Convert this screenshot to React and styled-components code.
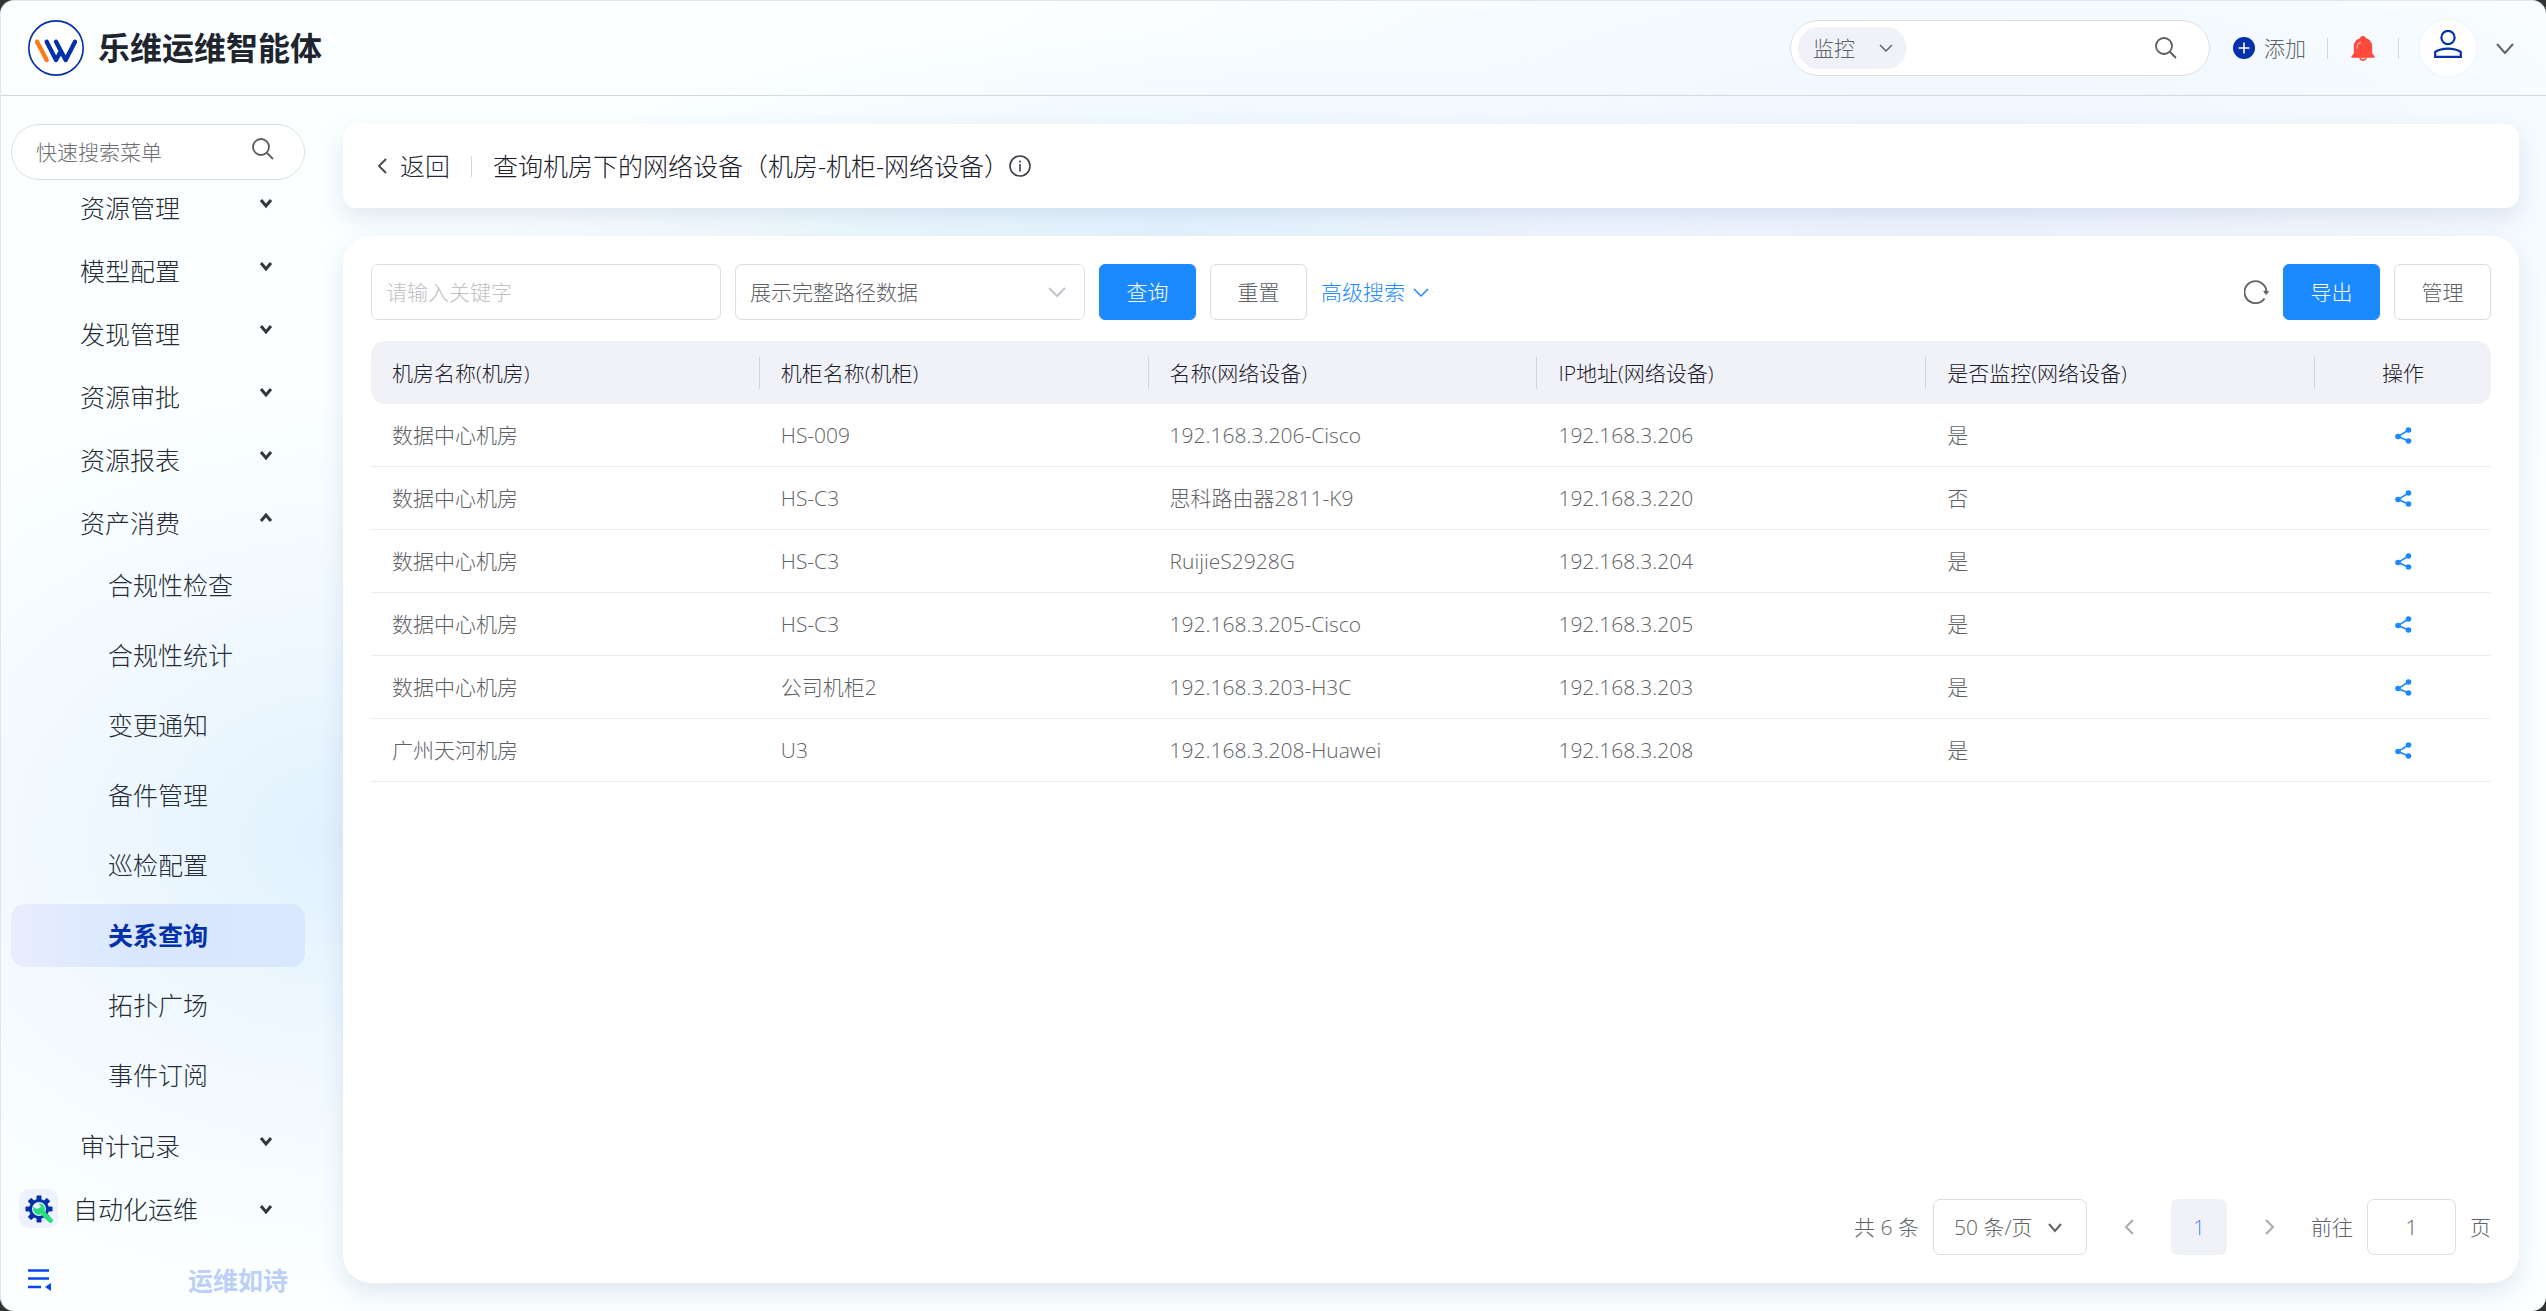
import { useState } from 'react';
import styled, { createGlobalStyle } from 'styled-components';

const GlobalStyle = createGlobalStyle`
    * {
        box-sizing: border-box;
    }

    body {
        margin: 0;
        background: #333;
        color: #262b36;
        font-family: 'Open Sans', 'Noto Sans CJK SC', sans-serif;
        font-size: 21px;
        font-weight: 300;
        line-height: 32px;
    }

    button, input, select {
        font: inherit;
        color: inherit;
        margin: 0;
        padding: 0;
        border: none;
        background: none;
        outline: none;
    }

    button {
        cursor: pointer;
    }

    select {
        appearance: none;
    }

    a {
        color: inherit;
        text-decoration: none;
    }
`;

const Frame = styled.div`
    min-height: 100vh;
    display: flex;
    flex-direction: column;
    border-top: 1px solid #e2e6e8;
    border-left: 1px solid #e2e6e8;
    border-radius: 14px;
    overflow: hidden;
    background:
        radial-gradient(ellipse 24% 34% at 14% 64%, #e0f1fe 0%, rgba(234, 245, 255, 0.7) 45%, rgba(250, 255, 255, 0) 100%),
        radial-gradient(ellipse 40% 30% at 76% 14%, #eff5ff 0%, rgba(250, 255, 255, 0) 100%),
        radial-gradient(ellipse 26% 16% at 46% 18%, #e4f5ff 0%, rgba(250, 255, 255, 0) 100%),
        #fbffff;
`;

const Header = styled.header`
    height: 95px;
    padding: 0 32px 0 27px;
    display: flex;
    align-items: center;
    border-bottom: 1px solid #d3d8da;
`;

const Brand = styled.a`
    display: flex;
    align-items: center;
    gap: 14px;
    margin-right: auto;
    font-size: 32px;
    font-weight: 700;
    color: #20242e;
`;

const HeaderSearch = styled.div`
    width: 420px;
    height: 56px;
    padding: 0 32px 0 7px;
    display: flex;
    align-items: center;
    border: 1px solid #dedede;
    border-radius: 28px;
    background: #fff;
    color: #606266;

    input {
        flex: 1;
        min-width: 0;
        padding: 0 14px;
    }
`;

const Chip = styled.label`
    width: 109px;
    height: 42px;
    padding: 0 14px 0 15px;
    display: flex;
    align-items: center;
    border-radius: 21px;
    background: #f1f2f8;

    select {
        flex: 1;
        min-width: 0;
    }
`;

const AddButton = styled.button`
    display: flex;
    align-items: center;
    gap: 9px;
    margin-left: 23px;
    color: #606266;
`;

const Divider = styled.span`
    width: 1px;
    height: 21px;
    margin: 0 21px;
    background: #d4d7de;
`;

const IconButton = styled.button`
    display: flex;
    align-items: center;
    justify-content: center;
    color: #606266;
`;

const AlarmButton = styled(IconButton)`
    padding: 0 2px;
`;

const Avatar = styled(IconButton)`
    width: 56px;
    height: 56px;
    margin-right: 20px;
    padding-bottom: 8px;
    border-radius: 50%;
    background: #fff;
    box-shadow: 0 0 4px rgba(0, 40, 160, 0.05);
`;

const Body = styled.div`
    flex: 1;
    display: flex;
`;

const Sidebar = styled.aside`
    width: 342px;
    padding: 28px 38px 0 10px;
    display: flex;
    flex-direction: column;
`;

const MenuSearch = styled.label`
    height: 56px;
    padding: 0 30px 0 24px;
    display: flex;
    align-items: center;
    border: 1px solid #dedede;
    border-radius: 28px;
    background: #fff;
    color: #606266;

    input {
        flex: 1;
        min-width: 0;
    }

    input::placeholder {
        color: #6b6d72;
        opacity: 1;
    }

    svg {
        margin-bottom: 6px;
    }
`;

const Menu = styled.nav`
    display: flex;
    flex-direction: column;
    margin-top: -4px;
    font-size: 25px;
`;

const MenuGroup = styled.button`
    height: 63px;
    padding: 0 33px 0 ${(p) => (p.$root ? 8 : 69)}px;
    display: flex;
    align-items: center;
    text-align: left;

    span {
        flex: 1;
    }

    > svg {
        margin-bottom: ${(p) => (p.$root ? 0 : 10)}px;
    }
`;

const MenuIcon = styled.i`
    width: 39px;
    height: 39px;
    margin-right: 15px;
    display: flex;
    align-items: center;
    justify-content: center;
    border-radius: 10px;
    background: #eef1ff;
`;

const MenuLink = styled.a`
    height: 63px;
    margin-bottom: 7px;
    padding: 0 0 2px 97px;
    display: flex;
    align-items: center;
    border-radius: 14px;
    color: ${(p) => (p.$active ? '#0231ab' : 'inherit')};
    font-weight: ${(p) => (p.$active ? 700 : 300)};
    background: ${(p) => (p.$active ? 'linear-gradient(90deg, #e8edfe, #d8e7fe 45%, #dae8ff)' : 'none')};
`;

const SidebarFooter = styled.div`
    height: 63px;
    margin-top: auto;
    padding: 0 17px;
    display: flex;
    align-items: center;
    justify-content: space-between;
    font-size: 25px;
    font-weight: 700;
    color: #bccff6;
`;

const Main = styled.main`
    flex: 1;
    min-width: 0;
    padding: 28px 27px 28px 0;
    display: flex;
    flex-direction: column;
    gap: 28px;
`;

const TitleCard = styled.section`
    height: 84px;
    padding: 0 35px;
    display: flex;
    align-items: center;
    border-radius: 14px;
    background: #fff;
    box-shadow: 0 10px 24px rgba(50, 80, 140, 0.13);
    font-size: 25px;
`;

const BackLink = styled.a`
    display: flex;
    align-items: center;
    gap: 13px;
`;

const PageTitle = styled.h1`
    margin: 0;
    font-size: 25px;
    font-weight: 300;
    color: #1c202b;
`;

const Card = styled.section`
    flex: 1;
    padding: 28px;
    display: flex;
    flex-direction: column;
    border-radius: 28px;
    background: #fff;
    box-shadow: 0 10px 24px rgba(50, 80, 140, 0.13);
`;

const Toolbar = styled.div`
    display: flex;
    align-items: center;
    gap: 14px;
    margin-bottom: 21px;
`;

const TextInput = styled.input`
    width: ${(p) => p.$width}px;
    height: 56px;
    padding: 0 14px;
    border: 1px solid #dcdee0;
    border-radius: 7px;
    color: #606266;
    text-align: ${(p) => p.$align || 'left'};

    &::placeholder {
        color: #c0c1c5;
        opacity: 1;
    }
`;

const SelectBox = styled.label`
    width: ${(p) => p.$width}px;
    height: 56px;
    padding: 0 ${(p) => p.$pad}px 0 ${(p) => p.$padLeft || 14}px;
    display: flex;
    align-items: center;
    border: 1px solid #dcdee0;
    border-radius: 7px;
    color: #606266;

    select {
        flex: 1;
        min-width: 0;
    }
`;

const Button = styled.button`
    width: 97px;
    height: 56px;
    border-radius: 6px;
    border: 1px solid ${(p) => (p.$primary ? '#1b89ff' : '#dcdee0')};
    background: ${(p) => (p.$primary ? '#1b89ff' : '#fff')};
    color: ${(p) => (p.$primary ? '#fff' : '#606266')};
`;

const MoreLink = styled.button`
    display: flex;
    align-items: center;
    gap: 8px;
    margin-right: auto;
    color: #1b89ff;
`;

const Table = styled.table`
    width: 100%;
    table-layout: fixed;
    border-collapse: separate;
    border-spacing: 0;
`;

const Th = styled.th`
    width: ${(p) => (p.$last ? '176px' : 'auto')};
    height: 63px;
    padding: 0;
    background: #f1f2f8;
    font-weight: 300;
    color: #1c202b;
    text-align: ${(p) => (p.$last ? 'center' : 'left')};

    div {
        padding: 0 0 0 ${(p) => (p.$last ? 0 : 21)}px;
        border-right: ${(p) => (p.$last ? 'none' : '1px solid #d3d5da')};
    }

    &:first-child {
        border-radius: 14px 0 0 14px;
    }

    &:last-child {
        border-radius: 0 14px 14px 0;
    }
`;

const Td = styled.td`
    height: 63px;
    padding: 0 21px;
    border-bottom: 1px solid #ebecee;
    color: #606266;

    &:last-child {
        padding: 0;
    }

    button {
        margin: 0 auto;
    }
`;

const Pager = styled.div`
    margin-top: auto;
    display: flex;
    align-items: center;
    justify-content: flex-end;
    gap: 14px;
    color: #606266;
`;

const PageButton = styled.button`
    width: 56px;
    height: 56px;
    display: flex;
    align-items: center;
    justify-content: center;
    border-radius: 7px;
    color: ${(p) => (p.$active ? '#3d8bff' : '#a9abb0')};
    background: ${(p) => (p.$active ? '#f1f2f8' : 'none')};
`;

const Chevron = ({ dir = 'down', w = 16, h = 9, stroke = 2, color = 'currentColor' }) => {
    const points = {
        down: `1,1 ${w / 2},${h - 1} ${w - 1},1`,
        up: `1,${h - 1} ${w / 2},1 ${w - 1},${h - 1}`,
        left: `${w - 1},1 1,${h / 2} ${w - 1},${h - 1}`,
        right: `1,1 ${w - 1},${h / 2} 1,${h - 1}`,
    };
    return (
        <svg width={w} height={h} overflow="visible" aria-hidden="true">
            <polyline points={points[dir]} fill="none" stroke={color} strokeWidth={stroke} />
        </svg>
    );
};

const SearchIcon = () => (
    <svg width="22" height="22" viewBox="0 0 22 22" fill="none" stroke="#5a5c60" strokeWidth="1.8" aria-hidden="true">
        <circle cx="9" cy="9" r="8" />
        <path d="M14.5 14.5L21 21" />
    </svg>
);

const Logo = () => (
    <svg width="56" height="56" viewBox="0 0 168 168" fill="none" strokeLinecap="round" strokeLinejoin="round" aria-hidden="true">
        <circle cx="84" cy="84" r="81.5" fill="#fff" stroke="#0231ab" strokeWidth="5" />
        <path d="M27 65L56 120" stroke="#ff7a12" strokeWidth="13" />
        <path d="M56 65L84 120L98 95M84 65L113 120L141 65" stroke="#0231ab" strokeWidth="13" />
    </svg>
);

const PlusIcon = () => (
    <svg width="22" height="22" viewBox="0 0 22 22" aria-hidden="true">
        <circle cx="11" cy="11" r="11" fill="#0231ab" />
        <path d="M11 5.5V16.5M5.5 11H16.5" stroke="#fff" strokeWidth="1.6" />
    </svg>
);

const BellIcon = () => (
    <svg width="24" height="25" viewBox="0 0 24 25" aria-hidden="true">
        <path
            d="M12 0C10.4 0 9.4 0.800 9 2.200C5 3.400 2.800 6.600 2.800 10.500V17.500L0.500 20.200C0 21 0.300 21.800 1.200 21.800H22.800C23.700 21.800 24 21 23.500 20.200L21.200 17.500V10.500C21.200 6.600 19 3.400 15 2.200C14.600 0.800 13.600 0 12 0Z"
            fill="#ff4a3d"
        />
        <path d="M8 21.500H16C15.400 23.700 14 25 12 25C10 25 8.600 23.700 8 21.500Z" fill="#ff4a3d" />
        <path d="M9.800 22H14.200C13.600 22.900 13 23.300 12 23.300C11 23.300 10.400 22.900 9.800 22Z" fill="#fff" />
        <path d="M6.200 12V10.500C6.200 8.600 7.500 7.200 9.500 6.500" fill="none" stroke="#ff9d96" strokeWidth="1.400" strokeLinecap="round" />
    </svg>
);

const UserIcon = () => (
    <svg width="28" height="28" viewBox="0 0 28 28" fill="none" stroke="#0231ab" strokeWidth="2.200" aria-hidden="true">
        <circle cx="14" cy="7.500" r="6.600" />
        <path d="M1.200 26.800V22C4.500 19.700 9 18.600 14 18.600S23.500 19.700 26.800 22V26.800Z" />
    </svg>
);

const InfoIcon = () => (
    <svg width="22" height="22" viewBox="0 0 22 22" fill="none" stroke="#3a3e48" strokeWidth="1.600" aria-hidden="true">
        <circle cx="11" cy="11" r="10" />
        <path d="M11 9V16.500M11 5.500V7.500" />
    </svg>
);

const RefreshIcon = () => (
    <svg width="25" height="24" viewBox="0 0 25 24" fill="none" stroke="#606266" strokeWidth="1.800" aria-hidden="true">
        <path d="M20.500 18.500A11 11 0 1 1 22.500 12.500" />
        <path d="M19.800 11L24.500 11.500L22 14.500Z" fill="#606266" strokeWidth="1" />
    </svg>
);

const ShareIcon = () => (
    <svg width="17" height="17" viewBox="0 0 17 17" fill="#1b89ff" aria-hidden="true">
        <path d="M13.500 3L3 9.500L13.500 14" fill="none" stroke="#1b89ff" strokeWidth="1.600" />
        <circle cx="13.500" cy="3" r="2.800" />
        <circle cx="3" cy="9.500" r="2.800" />
        <circle cx="13.500" cy="14" r="2.800" />
    </svg>
);

const GearIcon = () => (
    <svg width="28" height="28" viewBox="0 0 28 28" aria-hidden="true">
        <g fill="#0231ab">
            {[0, 45, 90, 135].map((angle) => (
                <rect key={angle} x="11.500" y="0.500" width="5" height="27" rx="1" transform={`rotate(${angle} 14 14)`} />
            ))}
            <circle cx="14" cy="14" r="10" />
        </g>
        <circle cx="14" cy="14" r="7" fill="#eef1ff" />
        <path d="M15 15L25.500 25.500" stroke="#27e07c" strokeWidth="4.600" strokeLinecap="round" />
        <path d="M13.500 8.200L16 11.500L14.500 13.800L11.500 14L8.600 11.800A6 6 0 0 0 14 20L19.500 16.500A6 6 0 0 0 13.500 8.200Z" fill="#27e07c" />
    </svg>
);

const CollapseIcon = () => (
    <svg width="24" height="22" viewBox="0 0 24 22" aria-hidden="true">
        <path d="M0 1.500H21M0 9.500H21M0 18H13" stroke="#0a45f0" strokeWidth="2.400" />
        <path d="M23 14V22L17 18Z" fill="#0a45f0" />
    </svg>
);

const groups = ['资源管理', '模型配置', '发现管理', '资源审批', '资源报表', '资产消费'];
const links = ['合规性检查', '合规性统计', '变更通知', '备件管理', '巡检配置', '关系查询', '拓扑广场', '事件订阅'];

const columns = ['机房名称(机房)', '机柜名称(机柜)', '名称(网络设备)', 'IP地址(网络设备)', '是否监控(网络设备)'];
const rows = [
    ['数据中心机房', 'HS-009', '192.168.3.206-Cisco', '192.168.3.206', '是'],
    ['数据中心机房', 'HS-C3', '思科路由器2811-K9', '192.168.3.220', '否'],
    ['数据中心机房', 'HS-C3', 'RuijieS2928G', '192.168.3.204', '是'],
    ['数据中心机房', 'HS-C3', '192.168.3.205-Cisco', '192.168.3.205', '是'],
    ['数据中心机房', '公司机柜2', '192.168.3.203-H3C', '192.168.3.203', '是'],
    ['广州天河机房', 'U3', '192.168.3.208-Huawei', '192.168.3.208', '是'],
];

const MenuArrow = ({ dir }) => <Chevron dir={dir} w={12} h={8} stroke={3} color="#33363d" />;

const App = () => {
    const [active, setActive] = useState('关系查询');
    const [keyword, setKeyword] = useState('');
    const [page, setPage] = useState('1');

    return (
        <>
            <GlobalStyle />
            <Frame>
                <Header>
                    <Brand href="#">
                        <Logo />
                        乐维运维智能体
                    </Brand>
                    <HeaderSearch>
                        <Chip>
                            <select aria-label="搜索范围">
                                <option>监控</option>
                            </select>
                            <Chevron w={14} h={8} stroke={1.5} />
                        </Chip>
                        <input type="text" aria-label="搜索" />
                        <IconButton aria-label="搜索">
                            <SearchIcon />
                        </IconButton>
                    </HeaderSearch>
                    <AddButton>
                        <PlusIcon />
                        添加
                    </AddButton>
                    <Divider />
                    <AlarmButton aria-label="告警">
                        <BellIcon />
                    </AlarmButton>
                    <Divider />
                    <Avatar aria-label="用户">
                        <UserIcon />
                    </Avatar>
                    <IconButton aria-label="展开">
                        <Chevron w={18} h={11} />
                    </IconButton>
                </Header>

                <Body>
                    <Sidebar>
                        <MenuSearch>
                            <input type="text" placeholder="快速搜索菜单" aria-label="快速搜索菜单" />
                            <SearchIcon />
                        </MenuSearch>
                        <Menu>
                            {groups.map((name) => (
                                <MenuGroup key={name}>
                                    <span>{name}</span>
                                    <MenuArrow dir={name === '资产消费' ? 'up' : 'down'} />
                                </MenuGroup>
                            ))}
                            {links.map((name) => (
                                <MenuLink key={name} href="#" $active={name === active} onClick={() => setActive(name)}>
                                    {name}
                                </MenuLink>
                            ))}
                            <MenuGroup>
                                <span>审计记录</span>
                                <MenuArrow dir="down" />
                            </MenuGroup>
                            <MenuGroup $root>
                                <MenuIcon>
                                    <GearIcon />
                                </MenuIcon>
                                <span>自动化运维</span>
                                <MenuArrow dir="down" />
                            </MenuGroup>
                        </Menu>
                        <SidebarFooter>
                            <IconButton aria-label="收起菜单">
                                <CollapseIcon />
                            </IconButton>
                            运维如诗
                        </SidebarFooter>
                    </Sidebar>

                    <Main>
                        <TitleCard>
                            <BackLink href="#">
                                <Chevron dir="left" w={9} h={16} color="#4a4d55" />
                                返回
                            </BackLink>
                            <Divider />
                            <PageTitle>查询机房下的网络设备（机房-机柜-网络设备）</PageTitle>
                            <InfoIcon />
                        </TitleCard>

                        <Card>
                            <Toolbar>
                                <TextInput
                                    type="text"
                                    $width={350}
                                    placeholder="请输入关键字"
                                    aria-label="关键字"
                                    value={keyword}
                                    onChange={(e) => setKeyword(e.target.value)}
                                />
                                <SelectBox $width={350} $pad={18}>
                                    <select aria-label="展示方式">
                                        <option>展示完整路径数据</option>
                                    </select>
                                    <Chevron w={18} h={10} color="#c0c4cc" />
                                </SelectBox>
                                <Button $primary>查询</Button>
                                <Button onClick={() => setKeyword('')}>重置</Button>
                                <MoreLink>
                                    高级搜索
                                    <Chevron w={16} h={9} stroke={1.5} />
                                </MoreLink>
                                <IconButton aria-label="刷新">
                                    <RefreshIcon />
                                </IconButton>
                                <Button $primary>导出</Button>
                                <Button>管理</Button>
                            </Toolbar>

                            <Table>
                                <thead>
                                    <tr>
                                        {columns.map((name) => (
                                            <Th key={name}>
                                                <div>{name}</div>
                                            </Th>
                                        ))}
                                        <Th $last>
                                            <div>操作</div>
                                        </Th>
                                    </tr>
                                </thead>
                                <tbody>
                                    {rows.map((row, i) => (
                                        <tr key={i}>
                                            {row.map((cell, j) => (
                                                <Td key={j}>{cell}</Td>
                                            ))}
                                            <Td>
                                                <IconButton aria-label="查看拓扑">
                                                    <ShareIcon />
                                                </IconButton>
                                            </Td>
                                        </tr>
                                    ))}
                                </tbody>
                            </Table>

                            <Pager>
                                <span>共 6 条</span>
                                <SelectBox $width={154} $pad={24} $padLeft={20}>
                                    <select aria-label="每页条数">
                                        <option>50 条/页</option>
                                    </select>
                                    <Chevron w={14} h={9} stroke={2} />
                                </SelectBox>
                                <PageButton aria-label="上一页">
                                    <Chevron dir="left" w={9} h={16} />
                                </PageButton>
                                <PageButton $active>1</PageButton>
                                <PageButton aria-label="下一页">
                                    <Chevron dir="right" w={9} h={16} />
                                </PageButton>
                                <label htmlFor="goto">前往</label>
                                <TextInput
                                    id="goto"
                                    type="text"
                                    $width={89}
                                    $align="center"
                                    value={page}
                                    onChange={(e) => setPage(e.target.value)}
                                />
                                <span>页</span>
                            </Pager>
                        </Card>
                    </Main>
                </Body>
            </Frame>
        </>
    );
};

export default App;
